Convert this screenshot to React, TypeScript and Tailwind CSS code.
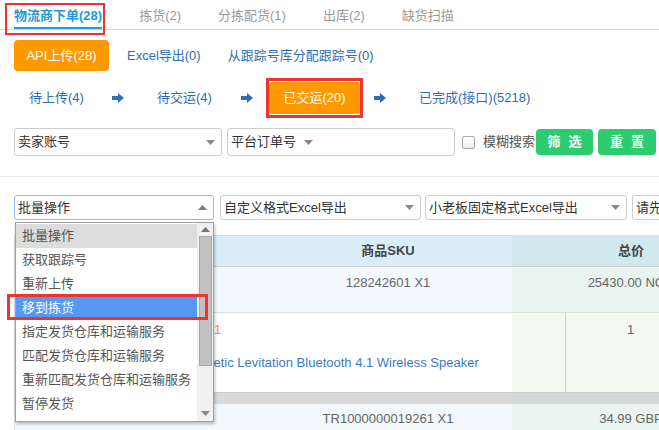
import React from 'react';

const tabs = ['拣货(2)', '分拣配货(1)', '出库(2)', '缺货扫描'];

const batchOptions = [
    '批量操作',
    '获取跟踪号',
    '重新上传',
    '移到拣货',
    '指定发货仓库和运输服务',
    '匹配发货仓库和运输服务',
    '重新匹配发货仓库和运输服务',
    '暂停发货',
    '恢复发货',
];

function Arrow() {
    return (
        <svg width="12" height="10" viewBox="0 0 12 10" className="shrink-0">
            <rect x="0" y="3" width="7" height="4" fill="#2c6fb4" />
            <polygon points="6,0 12,5 6,10" fill="#2c6fb4" />
        </svg>
    );
}

function Caret({ up = false }: { up?: boolean }) {
    return (
        <svg width="9" height="5" viewBox="0 0 9 5" className="shrink-0">
            {up ? <polygon points="0,5 9,5 4.5,0" fill="#777" /> : <polygon points="0,0 9,0 4.5,5" fill="#888" />}
        </svg>
    );
}

function Select({ label, className, focused = false }: { label: string; className: string; focused?: boolean }) {
    return (
        <div
            className={`flex shrink-0 items-center justify-between overflow-hidden rounded-[3px] border bg-white pl-[3px] pr-[6px] text-[13px] text-[#333] ${
                focused ? 'border-[#9bbbe8]' : 'border-[#ccc]'
            } ${className}`}
        >
            <span className="whitespace-nowrap">{label}</span>
            <Caret up={focused} />
        </div>
    );
}

export default function App() {
    return (
        <div className="relative w-[659px] h-[430px] overflow-hidden bg-white font-['Liberation_Sans','Noto_Sans_CJK_SC',sans-serif] text-[13px]">
            {/* tabs */}
            <div className="flex h-[30px] items-start gap-[37px] border-b border-[#d6d6d6] pl-[14px]">
                <div className="h-[29px] shrink-0 border-b-2 border-[#13a3dd] pt-[6px] font-bold text-[#1b9bd6]">物流商下单(28)</div>
                {tabs.map((t) => (
                    <div key={t} className="h-[29px] shrink-0 pt-[6px] text-[#999]">
                        {t}
                    </div>
                ))}
            </div>
            <div className="absolute left-[5px] top-[3px] h-[32px] w-[100px] border-2 border-[#ee3333]" />

            {/* source buttons */}
            <div className="mt-[10px] flex items-center pl-[14px]">
                <div className="flex h-[31px] w-[95px] items-center justify-center rounded-[4px] bg-[#ff9900] text-white">API上传(28)</div>
                <span className="ml-[18px] text-[#2f6db2]">Excel导出(0)</span>
                <span className="ml-[27px] text-[#2f6db2]">从跟踪号库分配跟踪号(0)</span>
            </div>

            {/* status flow */}
            <div className="mt-[7px] flex h-[40px] items-center text-[#2f6db2]">
                <span className="ml-[29px] w-[83px]">待上传(4)</span>
                <Arrow />
                <span className="ml-[33px] w-[84px]">待交运(4)</span>
                <Arrow />
                <div className="ml-[13px] border-[3px] border-[#ee3333] py-px">
                    <div className="flex h-[32px] w-[91px] items-center justify-center rounded-[3px] bg-[#ff9900] text-white">已交运(20)</div>
                </div>
                <span className="ml-[11px]">
                    <Arrow />
                </span>
                <span className="ml-[33px]">已完成(接口)(5218)</span>
            </div>

            {/* filters */}
            <div className="mt-[10px] flex h-[28px] items-center pl-[14px]">
                <Select label="卖家账号" className="h-[28px] w-[208px]" />
                <div className="ml-[5px] flex h-[28px] w-[228px] shrink-0 items-center rounded-[3px] border border-[#ccc] bg-white pl-[3px] text-[#333]">
                    <span>平台订单号</span>
                    <span className="ml-[8px]">
                        <Caret />
                    </span>
                </div>
                <div className="ml-[7px] h-[13px] w-[13px] shrink-0 rounded-[2px] border border-[#aaa] bg-gradient-to-b from-white to-[#eee]" />
                <span className="ml-[8px] shrink-0 whitespace-nowrap text-[#555]">模糊搜索</span>
                <div className="ml-px flex h-[26px] w-[57px] shrink-0 items-center justify-center rounded-[4px] bg-[#2ecc71] pl-[8px] font-bold tracking-[8px] text-white">筛选</div>
                <div className="ml-[5px] flex h-[26px] w-[58px] shrink-0 items-center justify-center rounded-[4px] bg-[#2ecc71] pl-[8px] font-bold tracking-[8px] text-white">重置</div>
            </div>

            <div className="mt-[20px] h-px bg-[#e6e6e6]" />

            {/* export selects */}
            <div className="mt-[18px] flex h-[25px] items-center pl-[14px]">
                <Select label="批量操作" className="h-[25px] w-[200px]" focused />
                <Select label="自定义格式Excel导出" className="ml-[6px] h-[25px] w-[201px]" />
                <Select label="小老板固定格式Excel导出" className="ml-[4px] h-[25px] w-[202px]" />
                <Select label="请先选择" className="ml-[5px] h-[25px] w-[120px]" />
            </div>

            {/* table */}
            <div className="mt-[15px] ml-[14px] w-[800px] border-l border-t border-[#ddd] text-[#666]">
                <div className="flex h-[31px] items-center border-b border-[#ccc] font-bold text-[#444]">
                    <div className="h-full w-[249px] bg-[#d9edf9]" />
                    <div className="flex h-full w-[248px] items-center justify-center bg-[#d9edf9]">商品SKU</div>
                    <div className="flex h-full w-[238px] items-center justify-center bg-[#d1e8ee]">总价</div>
                </div>
                <div className="flex h-[46px] border-b border-[#ddd]">
                    <div className="w-[249px] bg-[#f2f8fb]" />
                    <div className="w-[248px] bg-[#f2f8fb] pt-[6px] text-center">128242601 X1</div>
                    <div className="w-[238px] bg-[#e9f4f0] pt-[6px] text-center">25430.00 NGN</div>
                </div>
                <div className="flex h-[79px]">
                    <div className="relative w-[497px] bg-white">
                        <span className="absolute left-[199px] top-[7px] text-[#ff9900]">1</span>
                        <span className="absolute left-[166px] top-[40px] whitespace-nowrap text-[#3a7bc6]">
                            Magnetic Levitation Bluetooth 4.1 Wireless Speaker
                        </span>
                    </div>
                    <div className="w-[54px] border-r border-[#ccc] bg-[#f3f9f1]" />
                    <div className="w-[184px] bg-[#f3f9f1] pl-[61px] pt-[7px]">1</div>
                </div>
                <div className="flex h-[12px] border-t border-[#ccc]">
                    <div className="w-[497px] bg-[#d9d9d9]" />
                    <div className="w-[238px] bg-[#d0d9d3]" />
                </div>
                <div className="flex h-[30px]">
                    <div className="w-[249px] bg-[#f2f8fb]" />
                    <div className="w-[248px] bg-[#f2f8fb] pt-[5px] text-center">TR1000000019261 X1</div>
                    <div className="w-[238px] bg-[#e9f4f0] pt-[5px] text-center">34.99 GBP</div>
                </div>
            </div>

            {/* open dropdown */}
            <div className="absolute left-[15px] top-[222px] flex h-[200px] w-[199px] border border-[#a0a0a0] bg-white shadow-[1px_2px_3px_rgba(0,0,0,0.25)]">
                <div className="flex-1 overflow-hidden pt-px text-[#555]">
                    {batchOptions.map((o, i) => (
                        <div
                            key={o}
                            className={`flex h-[24px] items-center whitespace-nowrap pl-[6px] ${
                                i === 0 ? 'bg-[#dcdcdc]' : i === 3 ? 'bg-[#5699f2] text-white' : ''
                            }`}
                        >
                            {o}
                        </div>
                    ))}
                </div>
                <div className="flex w-[16px] flex-col items-center bg-[#f0f0f0]">
                    <div className="flex h-[13px] items-center">
                        <Caret up />
                    </div>
                    <div className="h-[130px] w-[13px] border border-[#a8a8a8] bg-[#c1c1c1]" />
                    <div className="flex-1" />
                    <div className="flex h-[16px] items-center">
                        <Caret />
                    </div>
                </div>
            </div>
            <div className="absolute left-[7px] top-[294px] h-[26px] w-[201px] border-[3px] border-[#ee3333]" />
        </div>
    );
}
